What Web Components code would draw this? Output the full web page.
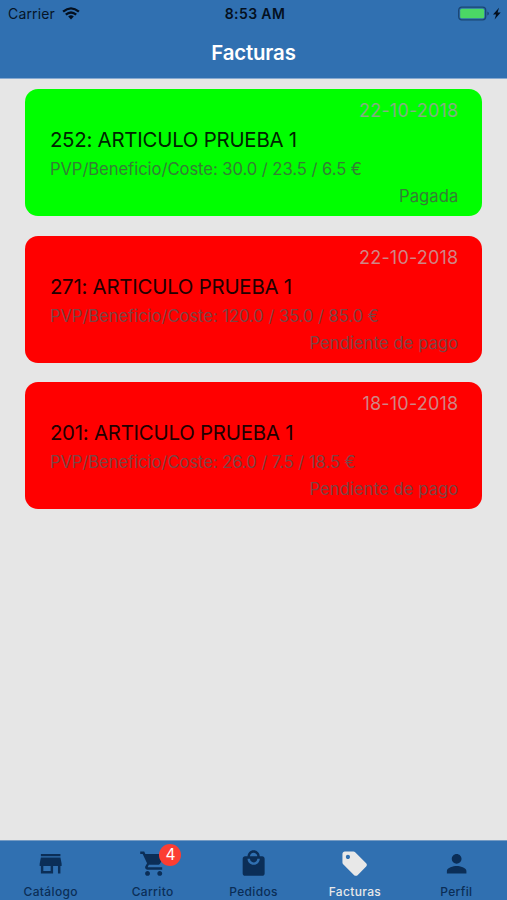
<!DOCTYPE html>
<html lang="es">
<head>
<meta charset="utf-8">
<title>Facturas</title>
<style>
html,body{margin:0;height:100%;overflow:hidden}
body{font-family:Inter,"Liberation Sans",sans-serif}
</style>
</head>
<body>
<facturas-app></facturas-app>
<script>
const define = (name, html) => {
  const t = document.createElement('template');
  t.innerHTML = html;
  customElements.define(name, class extends HTMLElement {
    constructor() {
      super();
      this.attachShadow({mode: 'open'}).append(t.content.cloneNode(true));
    }
  });
};

define('status-bar', `
<style>
:host{display:grid;grid-template-columns:1fr auto 1fr;align-items:center;height:27px;padding:0 5px 0 8px;font-size:14px;line-height:18px;color:#061527;box-sizing:border-box}
.left,.right{display:flex;align-items:center}
.left{gap:7px}.right{justify-content:flex-end}
.carrier{letter-spacing:.15px}
.time{font-weight:600;font-size:14px;letter-spacing:.4px;color:#04101f}
svg{display:block}
</style>
<div class="left"><span class="carrier">Carrier</span>
<svg width="18" height="13" viewBox="0 0 18 13" fill="none" stroke="#04101f" stroke-width="2.3"><path d="M1.1 4.7Q9-2 16.9 4.7M3.8 7.7Q9 3.3 14.2 7.7"/><path d="M9 12.4 6.2 9.4Q9 7.2 11.8 9.4Z" fill="#04101f" stroke="none"/></svg></div>
<span class="time">8:53 AM</span>
<div class="right"><svg width="44" height="16" viewBox="0 0 44 16"><rect x="0.7" y="1.2" width="27" height="12.6" rx="3" fill="none" stroke="#1b4673" stroke-width="1.3"/><rect x="2.2" y="2.7" width="24" height="9.6" rx="1.6" fill="#4bd865"/><path d="M29.3 5.5v4q1.6-.6 1.6-2t-1.6-2z" fill="#1b4673"/><path d="M41 1.8 35 8.4h3.1l-1.5 5 6.1-6.8h-3.1z" fill="#04101f"/></svg></div>`);

define('nav-header', `
<style>
:host{display:block;height:79px;background:#3070b1;border-bottom:1px solid #86a9d0;box-sizing:border-box}
h1{margin:0;height:51px;line-height:51px;text-align:center;color:#fff;font-size:20.4px;font-weight:600;letter-spacing:-.15px}
</style>
<status-bar></status-bar><h1><slot></slot></h1>`);

define('invoice-card', `
<style>
:host{display:flex;flex-direction:column;box-sizing:border-box;height:127px;border-radius:13px;padding:9px 24px 0 25px;background:#f00;color:#7c4444}
:host([paid]){background:#0f0;color:#357d35}
.date{align-self:flex-end;font-size:18px;line-height:26px;letter-spacing:.2px;color:#cf8585}
:host([paid]) .date{color:#83ae83}
.title{font-size:20.4px;line-height:30px;margin-top:1px;letter-spacing:-.23px;color:#210000;white-space:nowrap}
:host([paid]) .title{color:#002400}
.price{font-size:16.6px;line-height:26px;margin-top:1px;letter-spacing:-.05px;white-space:nowrap}
.state{align-self:flex-end;font-size:16.6px;line-height:26px;letter-spacing:.08px;margin-top:1px}
.title,.price{margin-left:-.5px}
</style>
<div class="date"><slot name="date"></slot></div>
<div class="title"><slot name="title"></slot></div>
<div class="price"><slot name="price"></slot></div>
<div class="state"><slot name="state"></slot></div>`);

define('tab-item', `
<style>
:host{flex:1 1 0;min-width:0;display:flex;flex-direction:column;align-items:center;color:#0b2e57}
:host([active]){color:#e8e8e8}
.icon{position:relative;height:29px;margin-top:8px}
:host([cart]) .icon{margin-left:4px}
:host([cart]) .label{margin-left:1px}
::slotted(svg){display:block;width:29.3px;height:29.3px;fill:currentColor}
::slotted([slot=badge]){position:absolute;left:20px;top:-5px;width:22px;height:22px;border-radius:50%;background:#fc3d32;color:#fff;font-size:15.5px;line-height:22px;text-align:center}
.label{font-size:12px;font-weight:500;letter-spacing:.35px;line-height:16px;margin-top:6px}
</style>
<div class="icon"><slot name="icon"></slot><slot name="badge"></slot></div>
<span class="label"><slot></slot></span>`);

define('tab-bar', `
<style>:host{display:flex;height:60px;flex:none;box-sizing:border-box;background:#3070b1;border-top:1px solid #759bc3;overflow:hidden}</style><slot></slot>`);

define('facturas-app', `
<style>
:host{display:flex;flex-direction:column;height:900px;background:#e6e6e6;overflow:hidden}
main{flex:1;display:flex;flex-direction:column;gap:19.6px;padding:10px 24.6px 0 25.4px}
</style>
<nav-header>Facturas</nav-header>
<main>
<invoice-card paid><span slot="date">22-10-2018</span><span slot="title">252: ARTICULO PRUEBA 1</span><span slot="price">PVP/Beneficio/Coste: 30.0 / 23.5 / 6.5 €</span><span slot="state">Pagada</span></invoice-card>
<invoice-card><span slot="date">22-10-2018</span><span slot="title">271: ARTICULO PRUEBA 1</span><span slot="price">PVP/Beneficio/Coste: 120.0 / 35.0 / 85.0 €</span><span slot="state">Pendiente de pago</span></invoice-card>
<invoice-card><span slot="date">18-10-2018</span><span slot="title">201: ARTICULO PRUEBA 1</span><span slot="price">PVP/Beneficio/Coste: 26.0 / 7.5 / 18.5 €</span><span slot="state">Pendiente de pago</span></invoice-card>
</main>
<tab-bar>
<tab-item><svg slot="icon" viewBox="0 0 24 24"><path d="M20 4H4v2h16V4zm1 10v-2l-1-5H4l-1 5v2h1v6h10v-6h4v6h2v-6h1zm-9 4H6v-4h6v4z"/></svg>Catálogo</tab-item>
<tab-item cart><svg slot="icon" viewBox="0 0 24 24"><path d="M7 18c-1.1 0-1.99.9-1.99 2S5.9 22 7 22s2-.9 2-2-.9-2-2-2zM1 2v2h2l3.6 7.59-1.35 2.45c-.16.28-.25.61-.25.96 0 1.1.9 2 2 2h12v-2H7.42c-.14 0-.25-.11-.25-.25l.03-.12.9-1.63h7.45c.75 0 1.41-.41 1.75-1.03l3.58-6.49c.08-.14.12-.31.12-.48 0-.55-.45-1-1-1H5.21l-.94-2H1zm16 16c-1.1 0-1.99.9-1.99 2s.89 2 1.99 2 2-.9 2-2-.9-2-2-2z"/></svg><span slot="badge">4</span>Carrito</tab-item>
<tab-item><svg slot="icon" viewBox="0 0 24 24"><path d="M19 6h-2c0-2.76-2.24-5-5-5S7 3.24 7 6H5c-1.1 0-1.99.9-1.99 2L3 20c0 1.1.9 2 2 2h14c1.1 0 2-.9 2-2V8c0-1.1-.9-2-2-2zm-7-3c1.66 0 3 1.34 3 3H9c0-1.66 1.34-3 3-3zm0 10c-2.76 0-5-2.24-5-5h2c0 1.66 1.34 3 3 3s3-1.34 3-3h2c0 2.76-2.24 5-5 5z"/></svg>Pedidos</tab-item>
<tab-item active><svg slot="icon" viewBox="0 0 24 24"><path d="M21.41 11.58l-9-9C12.05 2.22 11.55 2 11 2H4c-1.1 0-2 .9-2 2v7c0 .55.22 1.05.59 1.42l9 9c.36.36.86.58 1.41.58.55 0 1.05-.22 1.41-.59l7-7c.37-.36.59-.86.59-1.41 0-.55-.23-1.06-.59-1.42zM6.5 8.2C5.56 8.2 4.8 7.44 4.8 6.5S5.56 4.8 6.5 4.8 8.2 5.56 8.2 6.5 7.44 8.2 6.5 8.2z"/></svg>Facturas</tab-item>
<tab-item><svg slot="icon" viewBox="0 0 24 24"><path d="M12 12c2.21 0 4-1.79 4-4s-1.79-4-4-4-4 1.79-4 4 1.79 4 4 4zm0 2c-2.67 0-8 1.34-8 4v2h16v-2c0-2.66-5.33-4-8-4z"/></svg>Perfil</tab-item>
</tab-bar>`);
</script>
</body>
</html>
